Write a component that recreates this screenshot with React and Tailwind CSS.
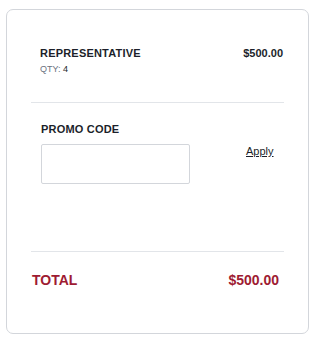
export default function App() {
  return (
    <div className="w-[317px] h-[345px] bg-white font-['Liberation_Sans',Arial,sans-serif]">
      <div className="ml-[6px] mt-[9px] w-[303px] h-[325px] border border-[#d3d6db] rounded-[7px] pl-[24px] pr-[24px] pt-[37px]">
        {/* line item */}
        <div className="pl-[9px] pr-[1px]">
          <div className="flex justify-between items-start">
            <span className="text-[11px] leading-[13px] font-bold tracking-[0.2px] text-[#1c1f2a]">REPRESENTATIVE</span>
            <span className="text-[11px] leading-[13px] font-bold text-[#1c1f2a]">$500.00</span>
          </div>
          <div className="mt-[3px] text-[9px] leading-[12px]">
            <span className="text-[#6b7280]">QTY: </span>
            <span className="text-[#1c1f2a]">4</span>
          </div>
        </div>
        <div className="mt-[27px] border-t border-[#e2e5e9]"></div>

        {/* promo */}
        <div className="pl-[10px] pt-[20px]">
          <div className="text-[11px] leading-[13px] font-bold tracking-[0.2px] text-[#1c1f2a]">PROMO CODE</div>
          <div className="mt-[8px] flex items-start">
            <input className="w-[149px] h-[40px] border border-[#d3d6db] rounded-[2px] outline-none" />
            <a href="#" className="ml-[56px] mt-[1px] text-[11px] leading-[13px] text-[#1c1f2a] underline">Apply</a>
          </div>
        </div>
        <div className="mt-[67px] border-t border-[#e2e5e9]"></div>

        {/* total */}
        <div className="pl-[1px] pr-[5px] pt-[20px] flex justify-between">
          <span className="text-[14px] leading-[17px] font-bold text-[#9e1b32]">TOTAL</span>
          <span className="text-[14px] leading-[17px] font-bold text-[#9e1b32]">$500.00</span>
        </div>
      </div>
    </div>
  );
}
